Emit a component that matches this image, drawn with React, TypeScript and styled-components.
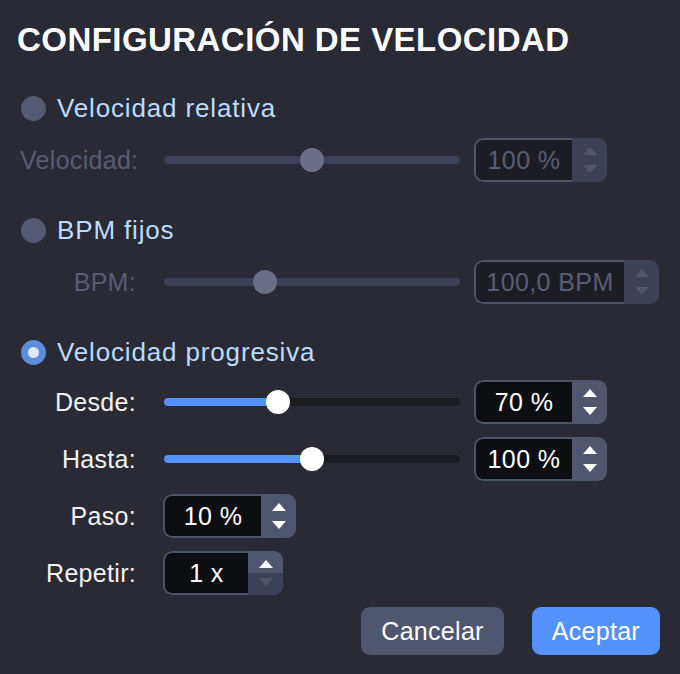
import styled, { createGlobalStyle } from 'styled-components'

const GlobalStyle = createGlobalStyle`
  html, body {
    margin: 0;
    padding: 0;
    background: #2a2a35;
  }
  body {
    font-family: "Liberation Sans", Arial, sans-serif;
  }
`

interface ISliderProps {
  value: number
  disabled?: boolean
}

const Slider = ({ value, disabled }: ISliderProps): JSX.Element => {
  return (
    <Track $disabled={disabled}>
      {!disabled ? <Fill style={{ width: `${value}%` }} /> : null}
      <Thumb $disabled={disabled} style={{ left: `${value}%` }} />
    </Track>
  )
}

interface ISpinProps {
  value: string
  width: number
  disabled?: boolean
  downDisabled?: boolean
}

const SpinBox = ({ value, width, disabled, downDisabled }: ISpinProps): JSX.Element => {
  return (
    <Spin style={{ width }}>
      <SpinField $disabled={disabled}>{value}</SpinField>
      <Stepper $disabled={disabled}>
        <StepHalf>
          <Arrow $disabled={disabled} $up />
        </StepHalf>
        <StepHalf $lower={downDisabled && !disabled}>
          <Arrow $disabled={disabled || downDisabled} />
        </StepHalf>
      </Stepper>
    </Spin>
  )
}

interface IRadioProps {
  label: string
  checked?: boolean
}

const Radio = ({ label, checked }: IRadioProps): JSX.Element => {
  return (
    <RadioRow>
      <RadioDot $checked={checked}>{checked ? <RadioInner /> : null}</RadioDot>
      <RadioLabel>{label}</RadioLabel>
    </RadioRow>
  )
}

const App = (): JSX.Element => {
  return (
    <>
      <GlobalStyle />
      <Dialog>
        <Title>CONFIGURACIÓN DE VELOCIDAD</Title>

        <Section>
          <Radio label="Velocidad relativa" />
          <Row>
            <RowLabel $disabled>Velocidad:</RowLabel>
            <Slider value={50} disabled />
            <SpinBox value="100 %" width={133} disabled />
          </Row>
        </Section>

        <Section>
          <Radio label="BPM fijos" />
          <Row>
            <RowLabel $disabled>BPM:</RowLabel>
            <Slider value={34} disabled />
            <SpinBox value="100,0 BPM" width={185} disabled />
          </Row>
        </Section>

        <Section>
          <Radio label="Velocidad progresiva" checked />
          <Rows>
            <Row>
              <RowLabel>Desde:</RowLabel>
              <Slider value={38.5} />
              <SpinBox value="70 %" width={133} />
            </Row>
            <Row>
              <RowLabel>Hasta:</RowLabel>
              <Slider value={50} />
              <SpinBox value="100 %" width={133} />
            </Row>
            <Row>
              <RowLabel>Paso:</RowLabel>
              <SpinBox value="10 %" width={133} />
            </Row>
            <Row>
              <RowLabel>Repetir:</RowLabel>
              <SpinBox value="1 x" width={120} downDisabled />
            </Row>
          </Rows>
        </Section>

        <Footer>
          <Button>Cancelar</Button>
          <Button $primary>Aceptar</Button>
        </Footer>
      </Dialog>
    </>
  )
}

const Dialog = styled.div`
  width: 680px;
  height: 674px;
  box-sizing: border-box;
  padding: 20px 20px 0 20px;
  display: flex;
  flex-direction: column;
  gap: 26px;
  background: #2a2a35;
  color: #ffffff;
`
const Title = styled.h1`
  margin: 0 0 0 -3px;
  height: 40px;
  line-height: 40px;
  font-size: 33px;
  font-weight: 700;
  letter-spacing: 0.45px;
  color: #ffffff;
`
const Section = styled.div`
  display: flex;
  flex-direction: column;
  gap: 8px;
`
const Rows = styled.div`
  display: flex;
  flex-direction: column;
  gap: 13px;
  margin-top: -2px;
`
const RadioRow = styled.div`
  height: 44px;
  display: flex;
  align-items: center;
  gap: 11px;
`
const RadioDot = styled.div<{ $checked?: boolean }>`
  width: 25px;
  height: 25px;
  margin-left: 1px;
  border-radius: 50%;
  background: ${p => (p.$checked ? '#5b8ddb' : '#545a72')};
  display: flex;
  align-items: center;
  justify-content: center;
`
const RadioInner = styled.div`
  width: 11px;
  height: 11px;
  border-radius: 50%;
  background: #e2e8f2;
`
const RadioLabel = styled.span`
  font-size: 26px;
  letter-spacing: 0.85px;
  color: #bcdcff;
`
const Row = styled.div`
  height: 44px;
  display: flex;
  align-items: center;
`
const RowLabel = styled.span<{ $disabled?: boolean }>`
  width: 116px;
  margin-right: 27px;
  text-align: right;
  font-size: 25px;
  letter-spacing: 0.3px;
  white-space: nowrap;
  color: ${p => (p.$disabled ? '#585d73' : '#f2f2f2')};
`
const Track = styled.div<{ $disabled?: boolean }>`
  position: relative;
  width: 296px;
  height: 8px;
  margin: 0 14px 0 1px;
  border-radius: 4px;
  background: ${p => (p.$disabled ? '#3c4157' : '#1b1c22')};
`
const Fill = styled.div`
  height: 100%;
  border-radius: 4px;
  background: #5591fa;
`
const Thumb = styled.div<{ $disabled?: boolean }>`
  position: absolute;
  top: 50%;
  width: 24px;
  height: 24px;
  border-radius: 50%;
  transform: translate(-50%, -50%);
  background: ${p => (p.$disabled ? '#6a6e87' : '#ffffff')};
`
const Spin = styled.div`
  height: 44px;
  display: flex;
  border-radius: 9px;
  overflow: hidden;
`
const SpinField = styled.div<{ $disabled?: boolean }>`
  flex: 1;
  box-sizing: border-box;
  border: 2px solid ${p => (p.$disabled ? '#4f5468' : '#4d536b')};
  border-right: none;
  border-radius: 9px 0 0 9px;
  background: ${p => (p.$disabled ? '#1c1d23' : '#0d0e12')};
  display: flex;
  align-items: center;
  justify-content: center;
  font-size: 25px;
  letter-spacing: 0.4px;
  color: ${p => (p.$disabled ? '#585d73' : '#ffffff')};
  white-space: nowrap;
`
const Stepper = styled.div<{ $disabled?: boolean }>`
  width: 35px;
  display: flex;
  flex-direction: column;
  background: ${p => (p.$disabled ? '#3c4157' : '#50566e')};
`
const StepHalf = styled.div<{ $lower?: boolean }>`
  flex: 1;
  display: flex;
  align-items: center;
  justify-content: center;
  background: ${p => (p.$lower ? '#3c4157' : 'transparent')};
`
const Arrow = styled.div<{ $up?: boolean; $disabled?: boolean }>`
  width: 0;
  height: 0;
  border-left: 7px solid transparent;
  border-right: 7px solid transparent;
  ${p =>
    p.$up
      ? `border-bottom: 8px solid ${p.$disabled ? '#50566e' : '#ffffff'}; margin-top: 4px;`
      : `border-top: 8px solid ${p.$disabled ? '#50566e' : '#ffffff'}; margin-bottom: 4px;`}
`
const Footer = styled.div`
  display: flex;
  justify-content: flex-end;
  gap: 28px;
  margin-top: -14px;
`
const Button = styled.button<{ $primary?: boolean }>`
  height: 48px;
  padding: 0 20px;
  border: none;
  border-radius: 9px;
  font-family: "Liberation Sans", Arial, sans-serif;
  font-size: 25px;
  letter-spacing: 0.3px;
  color: #ffffff;
  background: ${p => (p.$primary ? '#5591fa' : '#50566e')};
`

export default App
